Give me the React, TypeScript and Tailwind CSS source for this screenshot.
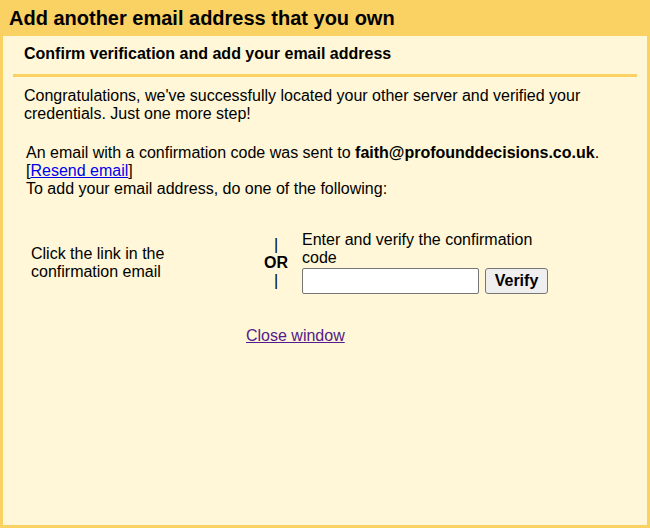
import React, { useState } from 'react';

const App: React.FC = () => {
    const [code, setCode] = useState('');

    return (
        <div
            className="w-[650px] h-[528px] bg-[#fad163] flex flex-col text-black"
            style={{ fontFamily: '"Liberation Sans", Arial, sans-serif' }}
        >
            {/* Title bar */}
            <div className="h-[36px] flex items-center px-[9px] text-[20px] font-bold leading-[23px]">
                Add another email address that you own
            </div>

            {/* Panel */}
            <div className="flex-1 mx-[3px] mb-[3px] bg-[#fff7d7] text-[16px] leading-[18px]">
                <div className="px-[10px] pt-[9px]">
                    <div className="px-[11px] font-bold">Confirm verification and add your email address</div>
                    <div className="h-[3px] bg-[#fad163] mt-[11px]" />
                </div>

                <div className="pl-[21px] pr-[10px] mt-[10px]">
                    Congratulations, we've successfully located your other server and verified your
                    <br />
                    credentials. Just one more step!
                </div>

                <div className="pl-[23px] pr-[10px] mt-[21px]">
                    An email with a confirmation code was sent to <b>faith@profounddecisions.co.uk</b>.
                    <br />
                    [<a href="#" className="text-[#0000ee] underline">Resend email</a>]
                    <br />
                    To add your email address, do one of the following:
                </div>

                {/* Options */}
                <div className="flex items-center pl-[28px] mt-[33px]">
                    <div className="w-[227px]">
                        Click the link in the
                        <br />
                        confirmation email
                    </div>
                    <div className="w-[36px] flex flex-col items-center">
                        <span>|</span>
                        <span className="font-bold">OR</span>
                        <span>|</span>
                    </div>
                    <div className="w-[252px] ml-[8px]">
                        <div>Enter and verify the confirmation code</div>
                        <div className="flex items-center gap-[6px] mt-[1px]">
                            <input
                                value={code}
                                onChange={(e) => setCode(e.target.value)}
                                className="w-[177px] h-[26px] bg-white border border-[#767676] rounded-[2px] px-1 outline-none"
                            />
                            <button className="w-[63px] h-[26px] bg-[#efefef] border border-[#767676] rounded-[3px] font-bold text-[16px]">
                                Verify
                            </button>
                        </div>
                    </div>
                </div>

                <div className="pl-[243px] mt-[33px]">
                    <a href="#" className="text-[#551a8b] underline">Close window</a>
                </div>
            </div>
        </div>
    );
};

export default App;
